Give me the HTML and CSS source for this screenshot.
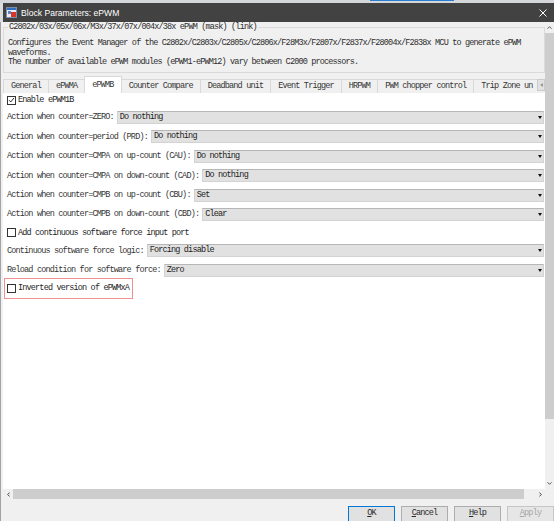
FILE: index.html
```html
<!DOCTYPE html>
<html>
<head>
<meta charset="utf-8">
<title>Block Parameters: ePWM</title>
<link rel="stylesheet" href="styles.css">
</head>
<body>
<div class="strip"><span class="strip-blue"></span></div>
<div class="window">
  <div class="titlebar">
    <svg class="app-icon" viewBox="0 0 11 11" width="11" height="11">
      <rect x="0.5" y="0.5" width="10" height="10" fill="#e9edf2" stroke="#7d8fa6"/>
      <rect x="1" y="1" width="9" height="2" fill="#2f6fc4"/>
      <rect x="2" y="4" width="3" height="3" fill="#5a86c8"/>
      <rect x="5" y="5" width="5" height="5" fill="#d9342b"/>
    </svg>
    <span class="title">Block Parameters: ePWM</span>
    <svg class="close" viewBox="0 0 8 8" width="8" height="8">
      <path d="M0.5 0.5 L7.5 7.5 M7.5 0.5 L0.5 7.5" stroke="#ffffff" stroke-width="1" fill="none"/>
    </svg>
  </div>
  <div class="client">
    <div class="scroller">
      <div class="viewport">
        <fieldset class="desc">
          <legend>C2802x/03x/05x/06x/M3x/37x/07x/004x/38x ePWM (mask) (link)</legend>
          <p>Configures the Event Manager of the C2802x/C2803x/C2805x/C2806x/F28M3x/F2807x/F2837x/F28004x/F2838x MCU to generate ePWM<br>waveforms.<br>The number of available ePWM modules (ePWM1-ePWM12) vary between C2000 processors.</p>
        </fieldset>
        <div class="tabs">
          <div class="tablist">
            <div class="tab">General</div>
            <div class="tab">ePWMA</div>
            <div class="tab active">ePWMB</div>
            <div class="tab">Counter Compare</div>
            <div class="tab">Deadband unit</div>
            <div class="tab">Event Trigger</div>
            <div class="tab">HRPWM</div>
            <div class="tab">PWM chopper control</div>
            <div class="tab">Trip Zone un</div>
          </div>
          <div class="tab-scroll"><span class="tri-left"></span></div>
        </div>
        <div class="panel">
          <div class="row-check row-enable">
            <span class="checkbox">
              <svg viewBox="0 0 8 8" width="8" height="8"><path d="M1.2 4.2 L3.2 6.2 L6.9 1.6" stroke="#222" stroke-width="1.1" fill="none"/></svg>
            </span>
            <span>Enable ePWM1B</span>
          </div>
          <div class="row-select"><span class="label">Action when counter=ZERO:</span><div class="combo">Do nothing</div></div>
          <div class="row-select"><span class="label">Action when counter=period (PRD):</span><div class="combo">Do nothing</div></div>
          <div class="row-select"><span class="label">Action when counter=CMPA on up-count (CAU):</span><div class="combo">Do nothing</div></div>
          <div class="row-select"><span class="label">Action when counter=CMPA on down-count (CAD):</span><div class="combo">Do nothing</div></div>
          <div class="row-select"><span class="label">Action when counter=CMPB on up-count (CBU):</span><div class="combo">Set</div></div>
          <div class="row-select"><span class="label">Action when counter=CMPB on down-count (CBD):</span><div class="combo">Clear</div></div>
          <div class="row-check row-add">
            <span class="checkbox"></span>
            <span>Add continuous software force input port</span>
          </div>
          <div class="row-select"><span class="label">Continuous software force logic:</span><div class="combo">Forcing disable</div></div>
          <div class="row-select"><span class="label">Reload condition for software force:</span><div class="combo">Zero</div></div>
          <div class="row-check row-inverted">
            <span class="checkbox"></span>
            <span>Inverted version of ePWMxA</span>
          </div>
        </div>
      </div>
      <div class="vscroll">
        <div class="sarrow"><svg viewBox="0 0 5 3" width="5" height="3"><path d="M0.5 2.7 L2.5 0.7 L4.5 2.7" stroke="#555" stroke-width="1" fill="none"/></svg></div>
        <div class="vthumb"></div>
        <div class="vtrack"></div>
        <div class="sarrow"><svg viewBox="0 0 5 3" width="5" height="3"><path d="M0.5 0.3 L2.5 2.3 L4.5 0.3" stroke="#555" stroke-width="1" fill="none"/></svg></div>
      </div>
      <div class="hscroll">
        <div class="harrow"><svg viewBox="0 0 3 5" width="3" height="5"><path d="M2.7 0.5 L0.7 2.5 L2.7 4.5" stroke="#444" stroke-width="1" fill="none"/></svg></div>
        <div class="hthumb"></div>
        <div class="htrack"></div>
        <div class="harrow"><svg viewBox="0 0 3 5" width="3" height="5"><path d="M0.3 0.5 L2.3 2.5 L0.3 4.5" stroke="#444" stroke-width="1" fill="none"/></svg></div>
      </div>
      <div class="corner"></div>
    </div>
    <div class="buttons">
      <div class="btn default"><u>O</u>K</div>
      <div class="btn"><u>C</u>ancel</div>
      <div class="btn"><u>H</u>elp</div>
      <div class="btn disabled"><u>A</u>pply</div>
    </div>
  </div>
</div>
</body>
</html>
```
FILE: styles.css
```css
* { box-sizing: border-box; }
html, body { margin: 0; padding: 0; }
body {
  width: 554px;
  height: 521px;
  overflow: hidden;
  background: #dcdcdc;
  font-family: "Liberation Mono", "DejaVu Sans Mono", monospace;
  font-size: 8.5px;
  letter-spacing: -0.83px;
  color: #262626;
}
.strip {
  height: 3px;
  background: #d4d6d9;
  display: flex;
}
.strip-blue {
  width: 84px;
  height: 1px;
  margin-left: 370px;
  background: #2a7fd4;
}
.window {
  height: 518px;
  display: flex;
  flex-direction: column;
}
.titlebar {
  height: 19px;
  margin-left: 3px;
  background: #424242;
  display: flex;
  align-items: center;
  padding: 0 7px 0 3px;
  color: #ffffff;
}
.app-icon { display: block; margin-right: 4px; flex-shrink: 0; }
.title {
  flex: 1;
  font-family: "Liberation Sans", Arial, sans-serif;
  font-size: 8.6px;
  letter-spacing: 0;
}
.close { display: block; }
.client {
  flex: 1;
  min-height: 0;
  display: flex;
  flex-direction: column;
  background: #f0f0f0;
  border-left: 1px solid #a3a3a3;
}
.scroller {
  flex: 1;
  min-height: 0;
  display: grid;
  grid-template-columns: 1fr 9px;
  grid-template-rows: 1fr 10px;
}
.viewport {
  grid-row: 1;
  grid-column: 1;
  min-height: 0;
  min-width: 0;
  overflow: hidden;
  display: flex;
  flex-direction: column;
  padding-left: 2px;
}
.desc {
  margin: 0;
  padding: 7px 4px 4px 4px;
  border: 1px solid #dadada;
  min-width: 0;
  flex-shrink: 0;
}
.desc legend {
  padding: 0 1px;
  line-height: 10px;
  color: #2e2e2e;
  white-space: nowrap;
}
.desc p {
  margin: 0;
  line-height: 9.6px;
  white-space: nowrap;
  color: #2e2e2e;
}
.tabs {
  display: flex;
  align-items: flex-end;
  height: 17px;
  margin-top: 3px;
  flex-shrink: 0;
}
.tablist {
  flex: 1;
  min-width: 0;
  overflow: hidden;
  display: flex;
  align-items: flex-end;
  height: 17px;
}
.tab {
  flex-shrink: 0;
  height: 14px;
  line-height: 13px;
  padding: 0 7px;
  border: 1px solid #d9d9d9;
  border-bottom: none;
  margin-right: -1px;
  background: #f0f0f0;
  white-space: nowrap;
  color: #363636;
}
.tab:last-child { padding-right: 4px; }
.tab.active {
  height: 17px;
  padding-top: 2px;
  background: #ffffff;
  position: relative;
}
.tab-scroll {
  flex-shrink: 0;
  width: 8px;
  height: 12px;
  margin-bottom: 2px;
  background: #e2e2e2;
  border: 1px solid #cbcbcb;
  display: flex;
  align-items: center;
  justify-content: center;
}
.tri-left {
  width: 0;
  height: 0;
  border-top: 2.5px solid transparent;
  border-bottom: 2.5px solid transparent;
  border-right: 3px solid #9a9a9a;
}
.panel {
  flex: 1;
  min-height: 0;
  background: #ffffff;
  padding: 0 1px 0 4px;
  display: flex;
  flex-direction: column;
}
.row-check {
  display: flex;
  align-items: center;
  gap: 2px;
  white-space: nowrap;
  flex-shrink: 0;
}
.row-enable { height: 15px; }
.row-add { height: 17px; }
.row-inverted {
  height: 21px;
  width: 129px;
  margin: -2px 0 0 -3px;
  padding-left: 2px;
  border: 1px solid #ef8f8f;
}
.checkbox {
  width: 9px;
  height: 9px;
  border: 1px solid #333333;
  background: #ffffff;
  flex-shrink: 0;
  display: flex;
  align-items: center;
  justify-content: center;
}
.checkbox svg { display: block; }
.row-select {
  height: 19.4px;
  display: flex;
  align-items: center;
  gap: 3px;
  flex-shrink: 0;
}
.row-select:nth-of-type(8), .row-select:nth-of-type(9) { height: 19.2px; }
.label { white-space: nowrap; flex-shrink: 0; color: #363636; }
.combo {
  flex: 1;
  min-width: 0;
  height: 13px;
  line-height: 11px;
  padding-left: 2px;
  background: #e1e1e1;
  border: 1px solid #d3d3d3;
  border-top-color: #b6b6b6;
  position: relative;
  white-space: nowrap;
  color: #222222;
}
.combo::after {
  content: "";
  position: absolute;
  right: 1px;
  top: 4px;
  border-left: 2px solid transparent;
  border-right: 2px solid transparent;
  border-top: 3px solid #111111;
}
.vscroll {
  grid-row: 1;
  grid-column: 2;
  background: #f0f0f0;
  display: flex;
  flex-direction: column;
}
.sarrow {
  height: 11px;
  display: flex;
  align-items: center;
  justify-content: center;
  flex-shrink: 0;
}
.sarrow svg, .harrow svg { display: block; }
.vthumb {
  height: 386px;
  background: #cdcdcd;
  flex-shrink: 0;
}
.vtrack { flex: 1; }
.hscroll {
  grid-row: 2;
  grid-column: 1;
  margin-left: 2px;
  background: #f0f0f0;
  display: flex;
}
.harrow {
  width: 10px;
  display: flex;
  align-items: center;
  justify-content: center;
  flex-shrink: 0;
}
.hthumb {
  width: 511px;
  background: #cdcdcd;
  flex-shrink: 0;
}
.htrack { flex: 1; }
.corner {
  grid-row: 2;
  grid-column: 2;
  background: #f0f0f0;
}
.buttons {
  height: 22px;
  flex-shrink: 0;
  display: flex;
  justify-content: flex-end;
  gap: 6px;
  padding-top: 7px;
  overflow: hidden;
}
.btn {
  width: 47px;
  height: 17px;
  flex-shrink: 0;
  background: #e1e1e1;
  border: 1px solid #adadad;
  text-align: center;
  line-height: 13px;
  color: #2a2a2a;
}
.btn u { text-underline-offset: 1px; }
.btn.default { border-color: #0078d7; }
.btn.disabled {
  color: #a6a6a6;
  background: #e6e6e6;
  border-color: #c6c6c6;
}
```
